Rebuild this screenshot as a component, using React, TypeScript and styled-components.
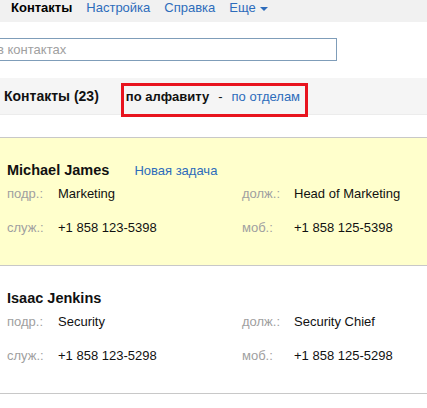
import React from "react";
import styled, { createGlobalStyle } from "styled-components";

const Global = createGlobalStyle`
  html, body { margin: 0; padding: 0; background: #fff; }
  body { font-family: "Liberation Sans", Arial, sans-serif; font-size: 13px; color: #000; overflow: hidden; }
`;

const LINK = "#2d6cbb";

const Nav = styled.nav`
  height: 22px;
  background: #f1f1f1;
  display: flex;
  align-items: flex-start;
  gap: 14px;
  padding-left: 11px;
  line-height: 16px;
`;

const NavItem = styled.a<{ $active?: boolean }>`
  font-size: 13px;
  color: ${(p) => (p.$active ? "#000" : LINK)};
  font-weight: ${(p) => (p.$active ? "bold" : "normal")};
  text-decoration: none;
  display: inline-flex;
  align-items: center;
`;

const Caret = styled.span`
  display: inline-block;
  width: 0;
  height: 0;
  margin-left: 4px;
  margin-top: 1px;
  border-left: 4px solid transparent;
  border-right: 4px solid transparent;
  border-top: 4px solid ${LINK};
`;

const SearchRow = styled.div`
  margin: 16px 0 17px -8px;
`;

const SearchInput = styled.input`
  box-sizing: border-box;
  width: 345px;
  height: 23px;
  border: 1px solid #7f9db9;
  padding: 0 0 0 4px;
  font-family: "Liberation Sans", Arial, sans-serif;
  font-size: 13px;
  outline: none;
  &::placeholder { color: #a0a0a0; }
`;

const HeaderBand = styled.div`
  height: 36px;
  background: #f5f5f5;
  border-bottom: 1px solid #ececec;
  display: flex;
  align-items: flex-start;
  padding-left: 4px;
`;

const Title = styled.h2`
  margin: 10px 0 0 0;
  font-size: 14px;
  line-height: 16px;
  font-weight: bold;
  color: #111;
`;

const SortBox = styled.div`
  margin: 5px 0 -3px 22px;
  border: 3px solid #e8141e;
  padding: 3px 5px 10px 2px;
  display: flex;
  align-items: center;
  gap: 9px;
  line-height: 15px;
  font-size: 13px;
  position: relative;
  z-index: 1;
`;

const SortCurrent = styled.span`
  font-weight: bold;
  color: #111;
`;

const Sep = styled.span`
  color: #111;
`;

const SortLink = styled.a`
  color: ${LINK};
  text-decoration: none;
`;

const List = styled.div`
  margin-top: 22px;
  border-top: 1px solid #c8c8c8;
`;

const Card = styled.div<{ $highlight?: boolean }>`
  background: ${(p) => (p.$highlight ? "#ffffcc" : "#fff")};
  border-bottom: 1px solid #c8c8c8;
  padding: 24px 7px 30px 7px;
`;

const NameRow = styled.div`
  display: flex;
  align-items: baseline;
  gap: 25px;
  line-height: 17px;
`;

const Name = styled.span`
  font-weight: bold;
  font-size: 14.5px;
  color: #111;
`;

const TaskLink = styled.a`
  font-size: 13px;
  color: ${LINK};
  text-decoration: none;
`;

const Fields = styled.div`
  margin-top: 7px;
  display: grid;
  grid-template-columns: 51px 184px 52px auto;
  row-gap: 19px;
  line-height: 15px;
`;

const Label = styled.span`
  color: #a0a0a0;
`;

const Value = styled.span`
  color: #111;
`;

type Contact = {
  name: string;
  dept: string;
  title: string;
  work: string;
  mobile: string;
  highlight?: boolean;
};

const contacts: Contact[] = [
  { name: "Michael James", dept: "Marketing", title: "Head of Marketing", work: "+1 858 123-5398", mobile: "+1 858 125-5398", highlight: true },
  { name: "Isaac Jenkins", dept: "Security", title: "Security Chief", work: "+1 858 123-5298", mobile: "+1 858 125-5298" },
];

export default function App() {
  return (
    <>
      <Global />
      <Nav>
        <NavItem $active>Контакты</NavItem>
        <NavItem href="#">Настройка</NavItem>
        <NavItem href="#">Справка</NavItem>
        <NavItem href="#">
          Еще<Caret />
        </NavItem>
      </Nav>
      <SearchRow>
        <SearchInput placeholder="в контактах" />
      </SearchRow>
      <HeaderBand>
        <Title>Контакты (23)</Title>
        <SortBox>
          <SortCurrent>по алфавиту</SortCurrent>
          <Sep>-</Sep>
          <SortLink href="#">по отделам</SortLink>
        </SortBox>
      </HeaderBand>
      <List>
        {contacts.map((c) => (
          <Card key={c.name} $highlight={c.highlight}>
            <NameRow>
              <Name>{c.name}</Name>
              {c.highlight && <TaskLink href="#">Новая задача</TaskLink>}
            </NameRow>
            <Fields>
              <Label>подр.:</Label>
              <Value>{c.dept}</Value>
              <Label>долж.:</Label>
              <Value>{c.title}</Value>
              <Label>служ.:</Label>
              <Value>{c.work}</Value>
              <Label>моб.:</Label>
              <Value>{c.mobile}</Value>
            </Fields>
          </Card>
        ))}
      </List>
    </>
  );
}
